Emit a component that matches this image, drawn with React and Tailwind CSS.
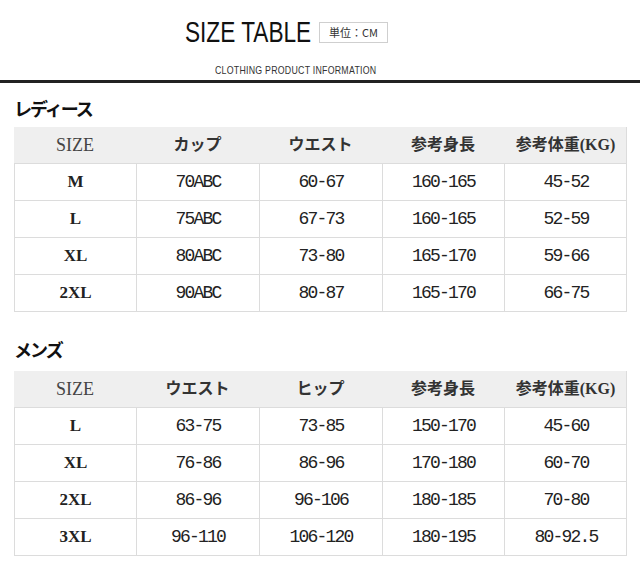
const ladies = {
  heads: ['SIZE', 'カップ', 'ウエスト', '参考身長', '参考体重(KG)'],
  rows: [
    ['M', '70ABC', '60-67', '160-165', '45-52'],
    ['L', '75ABC', '67-73', '160-165', '52-59'],
    ['XL', '80ABC', '73-80', '165-170', '59-66'],
    ['2XL', '90ABC', '80-87', '165-170', '66-75'],
  ],
};

const mens = {
  heads: ['SIZE', 'ウエスト', 'ヒップ', '参考身長', '参考体重(KG)'],
  rows: [
    ['L', '63-75', '73-85', '150-170', '45-60'],
    ['XL', '76-86', '86-96', '170-180', '60-70'],
    ['2XL', '86-96', '96-106', '180-185', '70-80'],
    ['3XL', '96-110', '106-120', '180-195', '80-92.5'],
  ],
};

const SizeTable = ({ data }) => (
  <div className="w-[613px] border-r border-b border-[#dcdcdc]">
    <div className="grid grid-cols-[122px_123px_123px_122px_123px] h-[36px] bg-[#efefef]">
      {data.heads.map((h, i) => (
        <div
          key={h}
          className={
            i === 0
              ? "flex items-center justify-center font-['Liberation_Serif',serif] text-[18px] text-[#444]"
              : "flex items-center justify-center font-['Liberation_Serif','Noto_Sans_CJK_JP',serif] font-bold text-[16px] text-[#333]"
          }
        >
          {h}
        </div>
      ))}
    </div>
    {data.rows.map((row) => (
      <div key={row[0]} className="grid grid-cols-[122px_123px_123px_122px_123px] h-[37px]">
        {row.map((cell, i) => (
          <div
            key={i}
            className={
              i === 0
                ? "flex items-center justify-center border-l border-t border-[#dcdcdc] font-['Liberation_Serif',serif] font-bold text-[17px] text-[#222]"
                : "flex items-center justify-center border-l border-t border-[#dcdcdc] font-['Liberation_Mono',monospace] text-[18px] tracking-[-1.8px] text-[#222]"
            }
          >
            {cell}
          </div>
        ))}
      </div>
    ))}
  </div>
);

export default function App() {
  return (
    <div className="w-[640px] h-[577px] bg-white overflow-hidden">
      <div className="h-[80px] pt-[22px] pl-[185px]">
        <div className="flex items-center h-[21px]">
          <div className="w-[125px] whitespace-nowrap leading-none">
            <span className="inline-block origin-left scale-x-[0.78] font-['Liberation_Sans',sans-serif] text-[29px] leading-none text-[#111]">
              SIZE TABLE
            </span>
          </div>
          <div className="ml-[9px] w-[69px] h-[21px] border border-[#cfcfcf] flex items-center justify-center font-['Noto_Sans_CJK_JP',sans-serif] text-[11px] text-[#333]">
            単位：CM
          </div>
        </div>
        <div className="mt-[21px] ml-[30px] whitespace-nowrap leading-none text-[11px] h-[9px]">
          <span className="inline-block origin-left scale-x-[0.8] font-['Liberation_Sans',sans-serif] text-[11px] leading-none tracking-[0.3px] text-[#333]">
            CLOTHING PRODUCT INFORMATION
          </span>
        </div>
      </div>
      <div className="h-[3px] bg-[#222]" />

      <div className="pl-[14px]">
        <h2 className="mt-[15px] h-[20px] leading-[20px] font-['Noto_Sans_CJK_JP',sans-serif] font-bold text-[18px] tracking-[-2px] text-[#111]">
          レディース
        </h2>
        <div className="mt-[9px]">
          <SizeTable data={ladies} />
        </div>

        <h2 className="mt-[27px] h-[20px] leading-[20px] font-['Noto_Sans_CJK_JP',sans-serif] font-bold text-[18px] tracking-[-2px] text-[#111]">
          メンズ
        </h2>
        <div className="mt-[12px]">
          <SizeTable data={mens} />
        </div>
      </div>
    </div>
  );
}
